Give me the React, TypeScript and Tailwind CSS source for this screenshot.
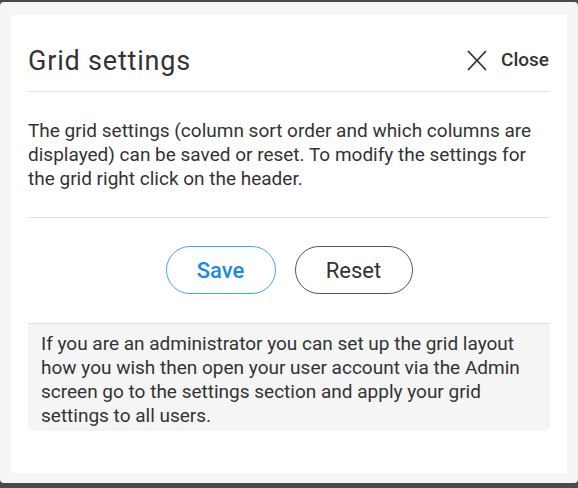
export default function App() {
  return (
    <div className="w-[578px] h-[488px] bg-[#4a4a4a] pt-[2px] font-['Roboto',sans-serif] text-[#333333]">
      <div className="h-[481px] bg-[#f5f5f5] rounded-[4px] pt-[13px] pl-[11px] pr-[11px]">
        <div className="bg-white h-[458px] px-[17px]">
          <div className="flex items-center justify-between pt-[28px] pb-[14px] border-b border-[#e0e0e0]">
            <h1 className="text-[27px] leading-[32px] tracking-[0.8px] font-normal text-[#333333] pt-[2px]">Grid settings</h1>
            <button className="flex items-center gap-[14px] text-[19px] font-medium text-[#333333] mr-[1px]">
              <svg width="20" height="21" viewBox="0 0 20 21" fill="none" stroke="#333333" strokeWidth="1.8">
                <path d="M1 1 L19 20 M19 1 L1 20" />
              </svg>
              <span>Close</span>
            </button>
          </div>

          <p className="pt-[27px] pb-[26px] text-[19px] leading-[24px] border-b border-[#e0e0e0]">
            The grid settings (column sort order and which columns are displayed) can be saved or reset. To modify the settings for the grid right click on the header.
          </p>

          <div className="flex justify-center gap-[19px] pt-[28px] pb-[29px]">
            <button className="w-[110px] h-[48px] rounded-full border border-[#42a5f5] text-[#1e88e5] text-[22px] font-medium">
              Save
            </button>
            <button className="w-[118px] h-[48px] rounded-full border border-[#555555] text-[#333333] text-[22px] font-normal">
              Reset
            </button>
          </div>

          <div className="bg-[#f5f5f5] border-t border-[#e0e0e0] rounded-b-[6px] pl-[13px] pr-[10px] pt-[8px] pb-[3px] text-[19px] leading-[24px]">
            If you are an administrator you can set up the grid layout how you wish then open your user account via the Admin screen go to the settings section and apply your grid settings to all users.
          </div>
        </div>
      </div>
    </div>
  );
}
